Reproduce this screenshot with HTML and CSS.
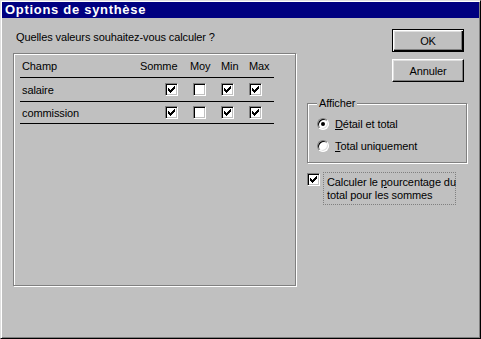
FILE: index.html
```html
<!DOCTYPE html>
<html lang="fr">
<head>
<meta charset="utf-8">
<title>Options de synthèse</title>
<link rel="stylesheet" href="styles.css">
</head>
<body>
<div class="window">
  <div class="titlebar">Options de synthèse</div>
  <div class="content">
    <div class="left">
      <div class="prompt">Quelles valeurs souhaitez-vous calculer ?</div>
      <div class="listframe">
        <div class="row head">
          <div class="c-name">Champ</div>
          <div class="c-somme">Somme</div>
          <div class="c-moy">Moy</div>
          <div class="c-min">Min</div>
          <div class="c-max">Max</div>
        </div>
        <div class="row r1">
          <div class="c-name">salaire</div>
          <div class="c-somme"><span class="cb on"></span></div>
          <div class="c-moy"><span class="cb"></span></div>
          <div class="c-min"><span class="cb on"></span></div>
          <div class="c-max"><span class="cb on"></span></div>
        </div>
        <div class="row r2">
          <div class="c-name">commission</div>
          <div class="c-somme"><span class="cb on"></span></div>
          <div class="c-moy"><span class="cb"></span></div>
          <div class="c-min"><span class="cb on"></span></div>
          <div class="c-max"><span class="cb on"></span></div>
        </div>
      </div>
    </div>
    <div class="right">
      <div class="buttons">
        <div class="btn default"><span>OK</span></div>
        <div class="btn"><span>Annuler</span></div>
      </div>
      <div class="group">
        <div class="legend">Afficher</div>
        <div class="radio-row r-first">
          <span class="radio on"></span>
          <span class="rlabel"><u>D</u>étail et total</span>
        </div>
        <div class="radio-row">
          <span class="radio"></span>
          <span class="rlabel"><u>T</u>otal uniquement</span>
        </div>
      </div>
      <div class="pct">
        <span class="cb on"></span>
        <span class="pct-label">Calculer le <u>p</u>ourcentage du<br>total pour les sommes</span>
      </div>
    </div>
  </div>
</div>
</body>
</html>
```
FILE: styles.css
```css
* { box-sizing: border-box; }
html, body { margin: 0; padding: 0; }
body {
  width: 481px;
  height: 339px;
  background: #c0c0c0;
  font-family: "Liberation Sans", Arial, sans-serif;
  font-size: 11px;
  letter-spacing: -0.1px;
  color: #000;
}
.window {
  width: 481px;
  height: 339px;
  background: #c0c0c0;
  border: 1px solid;
  border-color: #dfdfdf #000 #000 #dfdfdf;
  box-shadow: inset 1px 1px 0 #fff, inset -1px -1px 0 #808080;
  padding: 1px;
  display: flex;
  flex-direction: column;
}
.titlebar {
  height: 16px;
  background: #000080;
  color: #fff;
  font-weight: bold;
  font-size: 13px;
  letter-spacing: 0.7px;
  line-height: 16px;
  padding-left: 3px;
  white-space: nowrap;
}
.content {
  display: flex;
  flex: 1;
}
.left {
  margin-left: 11px;
  width: 284px;
}
.prompt {
  margin-top: 13px;
  margin-left: 3px;
  height: 12px;
  line-height: 12px;
  white-space: nowrap;
}
.listframe {
  margin-top: 10px;
  width: 283px;
  height: 233px;
  border: 1px solid #808080;
  box-shadow: inset 1px 1px 0 #fff, 1px 1px 0 #fff;
  padding: 0 0 0 6px;
}
.row {
  display: grid;
  grid-template-columns: 120px 50px 31px 28px 25px;
  width: 254px;
  border-bottom: 1px solid #000;
  align-items: center;
}
.row.head { height: 24px; padding-top: 1px; }
.row.r1 { height: 24px; }
.row.r2 { height: 22px; }
.c-name { padding-left: 2px; }
.row:not(.head) .c-somme { padding-left: 25px; }
.row:not(.head) .c-moy { padding-left: 3px; }
.cb {
  display: block;
  width: 13px;
  height: 13px;
  background: #fff;
  border: 1px solid;
  border-color: #808080 #fff #fff #808080;
  box-shadow: inset 1px 1px 0 #000, inset -1px -1px 0 #c0c0c0;
  position: relative;
}
.cb.on::after {
  content: "";
  position: absolute;
  left: 2px;
  top: 2px;
  width: 7px;
  height: 7px;
  background:
    linear-gradient(#000, #000) 0 2px / 1px 3px no-repeat,
    linear-gradient(#000, #000) 1px 3px / 1px 3px no-repeat,
    linear-gradient(#000, #000) 2px 4px / 1px 3px no-repeat,
    linear-gradient(#000, #000) 3px 3px / 1px 3px no-repeat,
    linear-gradient(#000, #000) 4px 2px / 1px 3px no-repeat,
    linear-gradient(#000, #000) 5px 1px / 1px 3px no-repeat,
    linear-gradient(#000, #000) 6px 0 / 1px 3px no-repeat;
}
.right {
  margin-left: 10px;
  width: 160px;
}
.buttons {
  margin-top: 11px;
  margin-left: 85px;
  display: flex;
  flex-direction: column;
  gap: 7px;
}
.btn {
  width: 72px;
  height: 23px;
  border: 1px solid;
  border-color: #fff #000 #000 #fff;
  box-shadow: inset -1px -1px 0 #808080, inset 1px 1px 0 #dfdfdf;
  display: flex;
  align-items: center;
  justify-content: center;
  line-height: 12px;
}
.btn.default {
  border: 1px solid #000;
  box-shadow: inset 1px 1px 0 #fff, inset -1px -1px 0 #000, inset -2px -2px 0 #808080, inset 2px 2px 0 #dfdfdf;
}
.group {
  margin-top: 21px;
  width: 160px;
  height: 60px;
  border: 1px solid #808080;
  box-shadow: inset 1px 1px 0 #fff, 1px 1px 0 #fff;
  position: relative;
  padding: 13px 0 0 9px;
}
.legend {
  position: absolute;
  left: 9px;
  top: -7px;
  background: #c0c0c0;
  padding: 0 2px;
  line-height: 12px;
}
.radio-row {
  display: flex;
  align-items: center;
  height: 13px;
}
.radio-row + .radio-row { margin-top: 9px; }
.radio {
  width: 12px;
  height: 12px;
  border-radius: 50%;
  background: #fff;
  border: 1px solid;
  border-color: #808080 #fff #fff #808080;
  box-shadow: inset 1px 1px 0 #000, inset -1px -1px 0 #dfdfdf;
  position: relative;
  flex: none;
}
.radio.on::after {
  content: "";
  position: absolute;
  left: 3px;
  top: 3px;
  width: 4px;
  height: 4px;
  border-radius: 50%;
  background: #000;
}
.rlabel { margin-left: 6px; line-height: 12px; }
.pct {
  margin-top: 9px;
  display: flex;
  align-items: flex-start;
}
.pct .cb { flex: none; margin-top: 1px; }
.pct-label {
  margin-left: 3px;
  padding: 3px 2px 2px 3px;
  border: 1px dotted #808080;
  line-height: 13px;
  width: 133px;
  white-space: nowrap;
}
```
